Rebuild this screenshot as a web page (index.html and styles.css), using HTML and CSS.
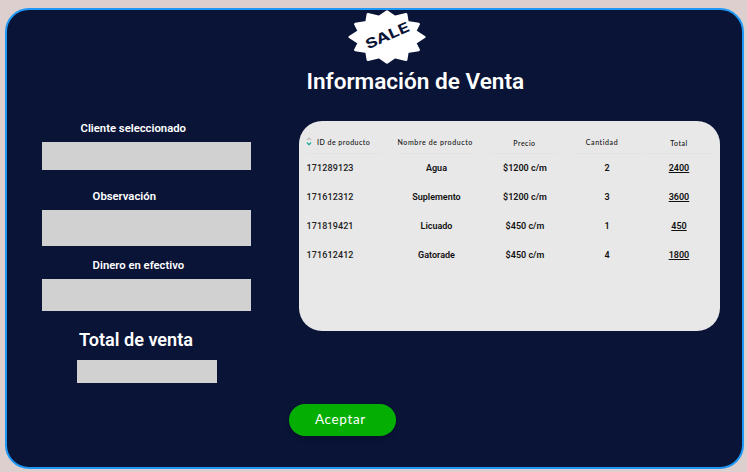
FILE: index.html
```html
<!DOCTYPE html>
<html lang="es">
<head>
<meta charset="utf-8">
<title>Información de Venta</title>
<link rel="stylesheet" href="styles.css">
</head>
<body>
<main class="frame">
  <header class="header">
    <svg class="badge" viewBox="0 0 234 164" aria-label="SALE">
      <path class="burst" d="M117 5 L140 21 L175 13 L179 37 L213 43 L202 64 L230 82 L202 100 L213 121 L179 127 L175 151 L140 143 L117 159 L94 143 L59 151 L55 127 L21 121 L32 100 L4 82 L32 64 L21 43 L55 37 L59 13 L94 21 Z"/>
      <text class="sale" transform="translate(59 120) rotate(-24)" textLength="142" lengthAdjust="spacingAndGlyphs">SALE</text>
    </svg>
    <h1 class="title">Información de Venta</h1>
  </header>
  <div class="content">
    <form class="fields">
      <label class="label client">Cliente seleccionado</label>
      <div class="input input-client"></div>
      <label class="label note">Observación</label>
      <div class="input input-note"></div>
      <label class="label cash">Dinero en efectivo</label>
      <div class="input input-cash"></div>
      <label class="label total-label">Total de venta</label>
      <div class="input input-total"></div>
    </form>
    <section class="side">
      <div class="card">
        <div class="col col-id">
          <div class="head"><svg class="sort" viewBox="0 0 6 9"><path class="up" d="M1.3 2.7 3 1 4.7 2.7"/><path class="down" d="M1.3 6 3 7.7 4.7 6"/></svg><span>ID de producto</span></div>
          <div class="cell">171289123</div><div class="cell">171612312</div><div class="cell">171819421</div><div class="cell">171612412</div>
        </div>
        <div class="col col-name">
          <div class="head">Nombre de producto</div>
          <div class="cell">Agua</div><div class="cell">Suplemento</div><div class="cell">Licuado</div><div class="cell">Gatorade</div>
        </div>
        <div class="col col-price">
          <div class="head">Precio</div>
          <div class="cell">$1200 c/m</div><div class="cell">$1200 c/m</div><div class="cell">$450 c/m</div><div class="cell">$450 c/m</div>
        </div>
        <div class="col col-qty">
          <div class="head">Cantidad</div>
          <div class="cell">2</div><div class="cell">3</div><div class="cell">1</div><div class="cell">4</div>
        </div>
        <div class="col col-total">
          <div class="head">Total</div>
          <div class="cell">2400</div><div class="cell">3600</div><div class="cell">450</div><div class="cell">1800</div>
        </div>
      </div>
      <button class="accept" type="button">Aceptar</button>
    </section>
  </div>
</main>
</body>
</html>
```
FILE: styles.css
```css
* { box-sizing: border-box; }
body {
  margin: 0;
  height: 472px;
  padding: 8px 3px 3px 5px;
  background: #dccfce;
  font-family: Roboto, sans-serif;
  overflow: hidden;
}
.frame {
  height: 461px;
  border: 2px solid #2098f5;
  border-radius: 24px;
  background: #0a1437;
  color: #fff;
}
.header {
  height: 110px;
  padding-left: 299.5px;
}
.badge { display: block; width: 78px; height: 54px; margin-left: 41.5px; }
.burst { fill: #fff; stroke: #fff; stroke-width: 8; stroke-linejoin: round; }
.sale { font: 700 42px Inter, sans-serif; fill: #0a1437; }
.title {
  margin: 4px 0 0;
  font-size: 22.6px;
  line-height: 28px;
  font-weight: 600;
  white-space: nowrap;
}
.content { display: flex; }
.fields { width: 245px; padding: 0 0 0 35px; flex: none; }
.label {
  display: block;
  font-size: 11.3px;
  line-height: 18px;
  font-weight: 600;
  white-space: nowrap;
}
.client { padding-left: 38.5px; height: 22px; }
.note, .cash { padding-left: 50.6px; }
.note { margin-top: 18px; height: 22px; }
.cash { margin-top: 11px; height: 22px; }
.total-label { margin-top: 15px; padding-left: 37px; height: 34px; font-size: 18.1px; line-height: 27px; }
.input { width: 209px; background: #d1d1d1; }
.input-client { height: 28px; }
.input-note { height: 36px; }
.input-cash { height: 32px; }
.input-total { width: 140.5px; height: 23px; margin-left: 34.5px; }
.side { padding-left: 37.4px; }
.card {
  display: flex;
  width: 421px;
  height: 210.5px;
  margin: 0.7px 0 0 10px;
  border-radius: 23px;
  background: #e8e8e8;
  color: #111;
}
.col { flex: none; text-align: center; white-space: nowrap; }
.head {
  height: 16.5px;
  border-bottom: 1px solid #e3e3e3;
  font: 500 7px/10px Lato, sans-serif;
  letter-spacing: 0.48px;
}
.cell {
  height: 29px;
  font-size: 9px;
  line-height: 29px;
  font-weight: 600;
}
.col-id { width: 75px; margin-left: 7.1px; padding-top: 16.5px; text-align: left; }
.col-id .head { display: flex; }
.col-id .cell { font-weight: 500; color: #222; letter-spacing: 0.12px; }
.sort { width: 6px; height: 9px; margin-right: 4.5px; fill: none; stroke-width: 1.2; stroke-linecap: round; }
.up { stroke: #bbb; }
.down { stroke: #12a594; }
.col-name { width: 78px; margin-left: 16px; padding-top: 16.5px; }
.col-name .head { padding-right: 3px; letter-spacing: 0.62px; }
.col-price { width: 67px; margin-left: 16px; padding-top: 17.3px; }
.col-price .head { padding-right: 1px; }
.col-qty { width: 68px; margin-left: 14.5px; padding-top: 16.5px; }
.col-qty .head { padding-right: 10px; letter-spacing: 0.6px; }
.col-total { width: 68px; margin-left: 4px; padding-top: 17.3px; }
.col-total .cell { text-decoration: underline; }
.accept {
  display: block;
  width: 107px;
  height: 32px;
  margin-top: 72.4px;
  padding: 0 5px 1px 0;
  border: 0;
  border-radius: 16px;
  background: #05ae03;
  box-shadow: 0 3px 5px rgba(0, 0, 0, 0.2);
  color: #fff;
  font: 400 13.5px/30px Lato, sans-serif;
  letter-spacing: 0.65px;
}
```
